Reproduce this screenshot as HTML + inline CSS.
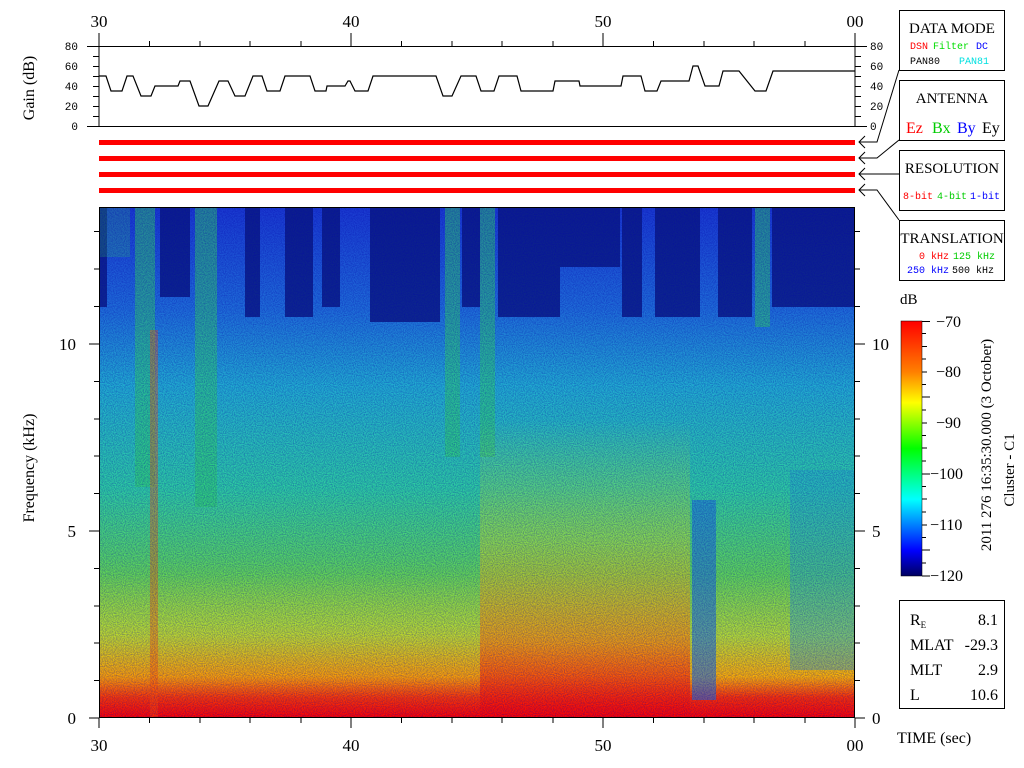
<!DOCTYPE html>
<html><head><meta charset="utf-8">
<style>
html,body{margin:0;padding:0;background:#fff;width:1024px;height:768px;overflow:hidden}
svg{display:block}
text{font-family:"Liberation Serif",serif}
text.m,.m text{font-family:"Liberation Mono",monospace}
</style></head><body>
<svg width="1024" height="768" viewBox="0 0 1024 768" xmlns="http://www.w3.org/2000/svg">
<defs>
<linearGradient id="base" x1="0" y1="0" x2="0" y2="1">
<stop offset="0" stop-color="#1a3ad0"/>
<stop offset="0.2" stop-color="#1f6fd8"/>
<stop offset="0.35" stop-color="#22b0d0"/>
<stop offset="0.55" stop-color="#2ed0a0"/>
<stop offset="0.72" stop-color="#5fd855"/>
<stop offset="0.84" stop-color="#b8e030"/>
<stop offset="0.92" stop-color="#ffb000"/>
<stop offset="0.96" stop-color="#ff3000"/>
<stop offset="1" stop-color="#ff0000"/>
</linearGradient>
<linearGradient id="hot" x1="0" y1="0" x2="0" y2="1">
<stop offset="0" stop-color="#c0e020" stop-opacity="0"/>
<stop offset="0.4" stop-color="#d0e020" stop-opacity="0.45"/>
<stop offset="0.75" stop-color="#ff8000" stop-opacity="0.7"/>
<stop offset="1" stop-color="#ff0000" stop-opacity="1"/>
</linearGradient>
<linearGradient id="cb" x1="0" y1="0" x2="0" y2="1">
<stop offset="0" stop-color="#ff0000"/>
<stop offset="0.2" stop-color="#ff8000"/>
<stop offset="0.32" stop-color="#ffff00"/>
<stop offset="0.5" stop-color="#00ff00"/>
<stop offset="0.7" stop-color="#00ffff"/>
<stop offset="0.9" stop-color="#0000ff"/>
<stop offset="1" stop-color="#000060"/>
</linearGradient>
<filter id="noise" x="0" y="0" width="1" height="1">
<feTurbulence type="fractalNoise" baseFrequency="0.9" numOctaves="1" seed="3"/>
<feColorMatrix values="0 0 0 0 0  0 0 0 0 0  0 0 0 0 0.4  0 0 0 0.8 -0.25"/>
</filter>
</defs>

<rect x="99" y="207" width="756" height="511" fill="url(#base)"/>
<g fill="#0a1a80" opacity="0.85">
<rect x="99" y="207" width="8" height="100"/>
<rect x="160" y="207" width="30" height="90"/>
<rect x="245" y="207" width="15" height="110"/>
<rect x="285" y="207" width="28" height="110"/>
<rect x="322" y="207" width="18" height="100"/>
<rect x="370" y="207" width="70" height="115"/>
<rect x="462" y="207" width="18" height="100"/>
<rect x="498" y="207" width="62" height="110"/>
<rect x="622" y="207" width="20" height="110"/>
<rect x="655" y="207" width="45" height="110"/>
<rect x="718" y="207" width="34" height="110"/>
<rect x="772" y="207" width="83" height="100"/>
<rect x="560" y="207" width="60" height="60"/>
</g>
<g fill="#30d060" opacity="0.5">
<rect x="135" y="207" width="20" height="280"/>
<rect x="195" y="207" width="22" height="300"/>
<rect x="445" y="207" width="15" height="250"/>
<rect x="480" y="207" width="15" height="250"/>
<rect x="755" y="207" width="15" height="120"/>
<rect x="100" y="207" width="30" height="50" opacity="0.5"/>
</g>
<rect x="480" y="420" width="210" height="298" fill="url(#hot)"/>
<rect x="100" y="560" width="380" height="158" fill="url(#hot)" opacity="0.5"/>
<rect x="692" y="500" width="24" height="200" fill="#1a70d8" opacity="0.6"/>
<rect x="790" y="470" width="65" height="200" fill="#20a0d0" opacity="0.4"/>
<rect x="150" y="330" width="8" height="388" fill="#ff5000" opacity="0.4"/>
<rect x="99" y="207" width="756" height="511" filter="url(#noise)"/>

<g stroke="#000" stroke-width="1" fill="none">
<rect x="99.5" y="207.5" width="755" height="510"/>
<path d="M99 718v10M351 718v10M603 718v10M855 718v10
M149.5 718v5M200 718v5M250 718v5M301 718v5M401.5 718v5M452 718v5M502 718v5M553 718v5M653.5 718v5M704 718v5M754 718v5M805 718v5
M89 718h10M89 531h10M89 344h10M855 718h10M855 531h10M855 344h10
M94 680.5h5M94 643h5M94 606h5M94 568.5h5M94 493.5h5M94 456h5M94 419h5M94 381.5h5M94 306.5h5M94 269h5M94 231.5h5
M855 680.5h5M855 643h5M855 606h5M855 568.5h5M855 493.5h5M855 456h5M855 419h5M855 381.5h5M855 306.5h5M855 269h5M855 231.5h5"/>
</g>
<g font-size="17">
<text x="99" y="751" text-anchor="middle">30</text>
<text x="351" y="751" text-anchor="middle">40</text>
<text x="603" y="751" text-anchor="middle">50</text>
<text x="855" y="751" text-anchor="middle">00</text>
<text x="99" y="27" text-anchor="middle">30</text>
<text x="351" y="27" text-anchor="middle">40</text>
<text x="603" y="27" text-anchor="middle">50</text>
<text x="855" y="27" text-anchor="middle">00</text>
<text x="76" y="724" text-anchor="end">0</text>
<text x="76" y="537" text-anchor="end">5</text>
<text x="76" y="350" text-anchor="end">10</text>
<text x="872" y="724">0</text>
<text x="872" y="537">5</text>
<text x="872" y="350">10</text>
</g>
<text x="34" y="468" font-size="16" text-anchor="middle" transform="rotate(-90 34 468)">Frequency (kHz)</text>

<g stroke="#000" stroke-width="1" fill="none">
<path d="M99 33v93M855 33v93M87 46.5h768M87 126.5h768M855 46.5h12M855 126.5h12"/>
<path d="M149.5 41v5M200 41v5M250 41v5M301 41v5M401.5 41v5M452 41v5M502 41v5M553 41v5M653.5 41v5M704 41v5M754 41v5M805 41v5M351 33v13M603 33v13"/>
<path d="M93 56.5h6M93 66.5h6M93 76.5h6M93 86.5h6M93 96.5h6M93 106.5h6M93 116.5h6M855 56.5h6M855 66.5h6M855 76.5h6M855 86.5h6M855 96.5h6M855 106.5h6M855 116.5h6"/>
<polyline stroke-width="1.2" stroke-dasharray="none" points="99,76 106,76 111,91 122,91 127,76 133,76 141,96 151,96 155,86 178,86 180,81 190,81 199,106 208,106 219,81 228,81 235,96 245,96 253,76 262,76 267,91 280,91 285,76 310,76 315,91 326,91 327,86 345,86 348,81 350,81 355,91 368,91 373,76 436,76 443,96 452,96 461,76 476,76 481,91 494,91 499,76 517,76 521,91 553,91 555,81 579,81 580,86 621,86 623,76 641,76 645,91 657,91 661,81 689,81 693,66 698,66 705,86 719,86 723,71 739,71 755,91 766,91 773,71 855,71"/>
</g>
<g class="m" font-size="11">
<text x="78" y="50" text-anchor="end">80</text>
<text x="78" y="70" text-anchor="end">60</text>
<text x="78" y="90" text-anchor="end">40</text>
<text x="78" y="110" text-anchor="end">20</text>
<text x="78" y="130" text-anchor="end">0</text>
<text x="870" y="50">80</text>
<text x="870" y="70">60</text>
<text x="870" y="90">40</text>
<text x="870" y="110">20</text>
<text x="870" y="130">0</text>
</g>
<text x="34" y="88" font-size="16" text-anchor="middle" transform="rotate(-90 34 88)">Gain (dB)</text>

<g fill="#ff0000">
<rect x="99" y="140" width="756" height="5"/>
<rect x="99" y="156" width="756" height="5"/>
<rect x="99" y="172" width="756" height="5"/>
<rect x="99" y="188" width="756" height="5"/>
</g>

<g stroke="#000" fill="none" stroke-width="1">
<path d="M865 136l-6 6 6 6M859 142h18l22-72"/>
<path d="M865 152l-6 6 6 6M859 158h18l22-18"/>
<path d="M865 168l-6 6 6 6M859 174h40"/>
<path d="M865 184l-6 6 6 6M859 190h18l22 30"/>
</g>

<g stroke="#000" fill="#fff">
<rect x="899.5" y="10.5" width="105" height="60"/>
<rect x="899.5" y="80.5" width="105" height="60"/>
<rect x="899.5" y="150.5" width="105" height="60"/>
<rect x="899.5" y="220.5" width="105" height="60"/>
<rect x="899.5" y="600.5" width="105" height="108"/>
</g>
<g font-size="15" text-anchor="middle">
<text x="952" y="33">DATA MODE</text>
<text x="952" y="103">ANTENNA</text>
<text x="952" y="173">RESOLUTION</text>
<text x="952" y="243">TRANSLATION</text>
</g>
<g class="m" font-size="10">
<text x="910" y="49" fill="#ff0000">DSN</text>
<text x="933" y="49" fill="#00dd00">Filter</text>
<text x="976" y="49" fill="#0000ff">DC</text>
<text x="910" y="64" fill="#000">PAN80</text>
<text x="959" y="64" fill="#00e0e0">PAN81</text>
<text x="903" y="199" fill="#ff0000">8-bit</text>
<text x="937" y="199" fill="#00cc00">4-bit</text>
<text x="970" y="199" fill="#0000ff">1-bit</text>
<text x="919" y="259" fill="#ff0000">0 kHz</text>
<text x="953" y="259" fill="#00cc00">125 kHz</text>
<text x="907" y="273" fill="#0000ff">250 kHz</text>
<text x="952" y="273" fill="#000">500 kHz</text>
</g>
<g font-size="16">
<text x="906" y="133" fill="#ff0000">Ez</text>
<text x="932" y="133" fill="#00cc00">Bx</text>
<text x="957" y="133" fill="#0000ff">By</text>
<text x="982" y="133" fill="#000">Ey</text>
</g>

<text x="900" y="304" font-size="15">dB</text>
<rect x="901" y="321" width="21" height="255" fill="url(#cb)" stroke="#000" stroke-width="0.5"/>
<g stroke="#000"><path d="M922 321.5h8M922 346.5h5M922 372h5M922 397h8M922 423h5M922 448h5M922 474h8M922 499h5M922 525h5M922 550h8M922 576h8M922 333.5h4M922 359h4M922 384.5h4M922 410h4M922 435.5h4M922 461h4M922 486.5h4M922 512h4M922 537.5h4M922 563h4"/></g>
<g font-size="16">
<text x="936" y="327">−70</text>
<text x="936" y="377">−80</text>
<text x="936" y="428">−90</text>
<text x="930" y="479">−100</text>
<text x="930" y="530">−110</text>
<text x="930" y="581">−120</text>
</g>
<text x="991" y="445" font-size="15" text-anchor="middle" transform="rotate(-90 991 445)">2011 276 16:35:30.000 (3 October)</text>
<text x="1014" y="470" font-size="15" text-anchor="middle" transform="rotate(-90 1014 470)">Cluster - C1</text>

<g font-size="16">
<text x="910" y="625">R<tspan font-size="9" dy="3">E</tspan></text>
<text x="998" y="625" text-anchor="end">8.1</text>
<text x="910" y="650">MLAT</text>
<text x="998" y="650" text-anchor="end">-29.3</text>
<text x="910" y="675">MLT</text>
<text x="998" y="675" text-anchor="end">2.9</text>
<text x="910" y="700">L</text>
<text x="998" y="700" text-anchor="end">10.6</text>
<text x="897" y="743">TIME (sec)</text>
</g>
</svg>
</body></html>
